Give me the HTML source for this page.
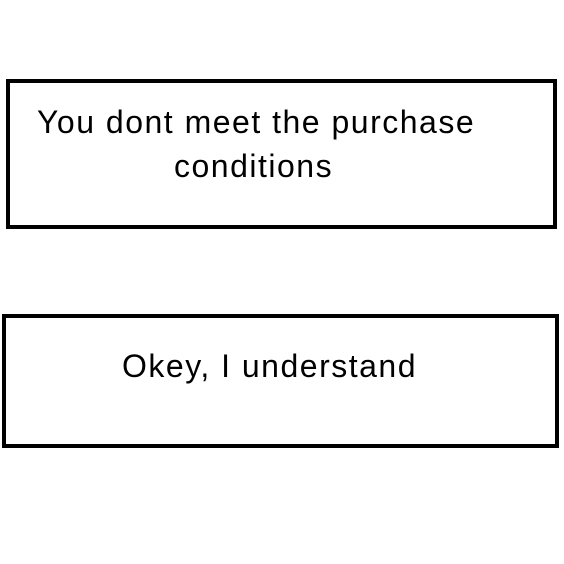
<!DOCTYPE html>
<html><head><style>
html,body{margin:0;padding:0;background:#fff;width:564px;height:564px;overflow:hidden;position:relative;font-family:"Liberation Sans",sans-serif;color:#000}
.b{position:absolute;border:4px solid #000;box-sizing:border-box}
.t{position:absolute;white-space:nowrap;font-size:32px;line-height:1;letter-spacing:1.5px}
</style></head><body>
<div class="b" style="left:6px;top:79px;width:551px;height:150px"></div>
<div class="t" style="left:37px;top:106px">You dont meet the purchase</div>
<div class="t" style="left:174px;top:150px">conditions</div>
<div class="b" style="left:2px;top:314px;width:557px;height:134px"></div>
<div class="t" style="left:122px;top:350px">Okey, I understand</div>
</body></html>
